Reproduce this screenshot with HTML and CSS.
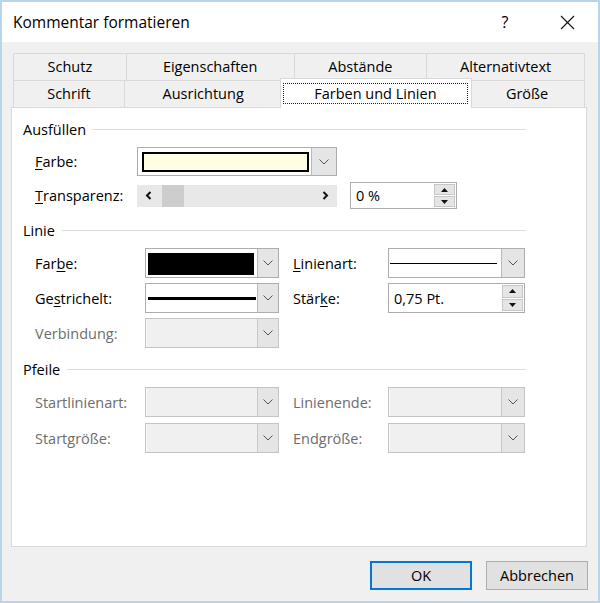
FILE: index.html
```html
<!DOCTYPE html>
<html lang="de">
<head>
<meta charset="utf-8">
<title>Kommentar formatieren</title>
<link rel="stylesheet" href="styles.css">
</head>
<body>
<div class="window">
  <div class="titlebar">
    <span class="title">Kommentar formatieren</span>
    <span class="help">?</span>
    <span class="close"><svg width="15" height="15" viewBox="0 0 15 15"><path d="M1 1L14 14M14 1L1 14" stroke="#111" stroke-width="1.1" fill="none"/></svg></span>
  </div>
  <div class="content">
    <div class="tabs">
      <div class="tabrow">
        <div class="tab t-schutz">Schutz</div>
        <div class="tab t-eigen">Eigenschaften</div>
        <div class="tab t-abst">Abstände</div>
        <div class="tab t-alt last">Alternativtext</div>
      </div>
      <div class="tabrow">
        <div class="tab t-schrift">Schrift</div>
        <div class="tab t-ausr">Ausrichtung</div>
        <div class="tab selected"><span class="focus">Farben und Linien</span></div>
        <div class="tab t-groesse last">Größe</div>
      </div>
    </div>

    <div class="panel">
      <div class="ghead"><span>Ausfüllen</span><i class="rule"></i></div>
      <div class="row fill r1">
        <span class="lbl"><u>F</u>arbe:</span>
        <div class="combo c-fill">
          <div class="field"><span class="swatch yellow"></span></div>
          <span class="drop wide"><svg width="10" height="6" viewBox="0 0 10 6"><path d="M0.5 0.5L5 5L9.5 0.5" stroke="#555" fill="none"/></svg></span>
        </div>
      </div>
      <div class="row fill r2">
        <span class="lbl"><u>T</u>ransparenz:</span>
        <div class="scroll">
          <span class="sarrow"><svg width="7" height="9" viewBox="0 0 7 9"><path d="M5.5 1L2 4.5L5.5 8" stroke="#111" stroke-width="2" fill="none"/></svg></span>
          <span class="thumb"></span>
          <span class="track"></span>
          <span class="sarrow"><svg width="7" height="9" viewBox="0 0 7 9"><path d="M1.5 1L5 4.5L1.5 8" stroke="#111" stroke-width="2" fill="none"/></svg></span>
        </div>
        <div class="spin s-fill">
          <span class="val">0 %</span>
          <span class="btns">
            <span><svg width="7" height="4" viewBox="0 0 7 4"><path d="M0 4L3.5 0L7 4Z" fill="#111"/></svg></span>
            <span><svg width="7" height="4" viewBox="0 0 7 4"><path d="M0 0L3.5 4L7 0Z" fill="#111"/></svg></span>
          </span>
        </div>
      </div>

      <div class="ghead sec"><span>Linie</span><i class="rule"></i></div>
      <div class="row line first">
        <span class="lbl">Far<u>b</u>e:</span>
        <div class="combo">
          <div class="field f-black"><span class="swatch black"></span></div>
          <span class="drop"><svg width="10" height="6" viewBox="0 0 10 6"><path d="M0.5 0.5L5 5L9.5 0.5" stroke="#555" fill="none"/></svg></span>
        </div>
        <span class="lbl lab2"><u>L</u>inienart:</span>
        <div class="combo">
          <div class="field f-thin"><span class="stroke thin"></span></div>
          <span class="drop wide"><svg width="10" height="6" viewBox="0 0 10 6"><path d="M0.5 0.5L5 5L9.5 0.5" stroke="#555" fill="none"/></svg></span>
        </div>
      </div>
      <div class="row line">
        <span class="lbl">Ge<u>s</u>trichelt:</span>
        <div class="combo">
          <div class="field f-thick"><span class="stroke thick"></span></div>
          <span class="drop"><svg width="10" height="6" viewBox="0 0 10 6"><path d="M0.5 0.5L5 5L9.5 0.5" stroke="#555" fill="none"/></svg></span>
        </div>
        <span class="lbl lab2">Stär<u>k</u>e:</span>
        <div class="spin">
          <span class="val">0,75 Pt.</span>
          <span class="btns">
            <span><svg width="7" height="4" viewBox="0 0 7 4"><path d="M0 4L3.5 0L7 4Z" fill="#111"/></svg></span>
            <span><svg width="7" height="4" viewBox="0 0 7 4"><path d="M0 0L3.5 4L7 0Z" fill="#111"/></svg></span>
          </span>
        </div>
      </div>
      <div class="row line">
        <span class="lbl off">Verbindung:</span>
        <div class="combo disabled">
          <div class="field"></div>
          <span class="drop"><svg width="10" height="6" viewBox="0 0 10 6"><path d="M0.5 0.5L5 5L9.5 0.5" stroke="#555" fill="none"/></svg></span>
        </div>
      </div>

      <div class="ghead sec"><span>Pfeile</span><i class="rule"></i></div>
      <div class="row line first">
        <span class="lbl off">Startlinienart:</span>
        <div class="combo disabled">
          <div class="field"></div>
          <span class="drop"><svg width="10" height="6" viewBox="0 0 10 6"><path d="M0.5 0.5L5 5L9.5 0.5" stroke="#555" fill="none"/></svg></span>
        </div>
        <span class="lbl lab2 off">Linienende:</span>
        <div class="combo disabled">
          <div class="field"></div>
          <span class="drop wide"><svg width="10" height="6" viewBox="0 0 10 6"><path d="M0.5 0.5L5 5L9.5 0.5" stroke="#555" fill="none"/></svg></span>
        </div>
      </div>
      <div class="row line r-gap6">
        <span class="lbl off">Startgröße:</span>
        <div class="combo disabled">
          <div class="field"></div>
          <span class="drop"><svg width="10" height="6" viewBox="0 0 10 6"><path d="M0.5 0.5L5 5L9.5 0.5" stroke="#555" fill="none"/></svg></span>
        </div>
        <span class="lbl lab2 off">Endgröße:</span>
        <div class="combo disabled">
          <div class="field"></div>
          <span class="drop wide"><svg width="10" height="6" viewBox="0 0 10 6"><path d="M0.5 0.5L5 5L9.5 0.5" stroke="#555" fill="none"/></svg></span>
        </div>
      </div>
    </div>

    <div class="buttons">
      <button class="btn default">OK</button>
      <button class="btn">Abbrechen</button>
    </div>
  </div>
</div>
</body>
</html>
```

FILE: styles.css
```css
* { box-sizing: border-box; }
html, body { margin: 0; padding: 0; }
body {
  background: #ffffff;
  font-family: "Open Sans", "Noto Sans", "Liberation Sans", sans-serif;
  font-size: 14.5px;
  color: #000;
}
.window {
  width: 600px;
  height: 603px;
  border: 2px solid #b9d5ea;
  background: #f0f0f0;
  display: flex;
  flex-direction: column;
}
.titlebar {
  flex: none;
  height: 40px;
  background: #ffffff;
  display: flex;
  align-items: center;
  padding: 0 8px 0 11px;
}
.title { flex: 1; font-size: 15.5px; }
.help { width: 30px; text-align: center; font-size: 16px; margin-right: 24px; }
.close { width: 46px; display: flex; align-items: center; justify-content: center; }

.content {
  flex: 1;
  display: flex;
  flex-direction: column;
  padding: 11px 11px 0 9px;
}

/* tabs */
.tabs { margin: 0 2px; }
.tabrow { display: flex; height: 27px; }
.tab {
  height: 27px;
  border: 1px solid #d9d9d9;
  border-bottom: none;
  margin-right: -1px;
  background: #f0f0f0;
  display: flex;
  align-items: center;
  justify-content: center;
  white-space: nowrap;
  padding-bottom: 1px;
}
.tab.last { margin-right: 0; }
.t-schutz { width: 114px; }
.t-eigen { width: 169px; }
.t-abst { width: 134px; }
.t-alt { width: 159px; }
.t-schrift { width: 112px; }
.t-ausr { width: 159px; }
.t-groesse { width: 116px; }
.tab.selected {
  position: relative;
  z-index: 2;
  width: 193px;
  height: 30px;
  margin: -2px -3px 0 -2px;
  background: #ffffff;
  padding: 4px 3px 4px 2px;
  align-items: stretch;
}
.focus {
  flex: 1;
  border: 1px dotted #222;
  display: flex;
  align-items: center;
  justify-content: center;
  padding-bottom: 1px;
}

/* panel */
.panel {
  flex: none;
  height: 440px;
  background: #ffffff;
  border: 1px solid #d9d9d9;
  padding: 12px 0 0 11px;
}
.ghead {
  width: 503px;
  height: 18px;
  display: flex;
  align-items: center;
}
.ghead.sec { margin-top: 12px; }
.rule { flex: 1; height: 1px; background: #dcdcdc; margin-left: 7px; margin-top: 1px; }

.row {
  display: grid;
  align-items: center;
  margin-left: 12px;
}
.lbl { white-space: nowrap; }
.lbl u { text-underline-offset: 2px; text-decoration-thickness: 1px; }
.lbl.off { color: #6d6d6d; }

.row.fill { grid-template-columns: 102px 200px 120px; }
.row.fill.r1 { height: 29px; margin-top: 9px; }
.row.fill.r2 { height: 27px; margin-top: 6px; }
.s-fill { margin-left: 13px; }

.row.line { grid-template-columns: 110px 134px 109px 137px; height: 30px; margin-top: 5px; }
.row.line.first { margin-top: 9px; }
.row.line.r-gap6 { margin-top: 6px; }
.lab2 { padding-left: 14px; }

/* combo boxes */
.combo {
  height: 100%;
  display: flex;
  border: 1px solid #adadad;
  background: #ffffff;
}
.combo .field { flex: 1; display: flex; align-items: center; }
.combo .drop {
  width: 21px;
  background: #e5e5e5;
  border-left: 1px solid #b9b9b9;
  display: flex;
  align-items: center;
  justify-content: center;
}
.combo .drop.wide { width: 23px; }
.combo.c-fill .drop { width: 25px; }
.combo.c-fill .field { padding: 4px 2px 3px 4px; align-items: stretch; }
.swatch { flex: 1; }
.swatch.yellow { background: #fffde2; border: 2px solid #000; }
.combo .f-black { padding: 4px 3px 2px 2px; align-items: stretch; }
.swatch.black { background: #000; }
.combo .f-thin { padding: 0 4px 0 1px; }
.combo .f-thick { padding: 0 1px 0 2px; }
.stroke { flex: 1; background: #000; }
.stroke.thin { height: 1px; }
.stroke.thick { height: 3px; }

.combo.disabled { background: #f0f0f0; border-color: #c4c4c4; }
.combo.disabled .field { border-left: 1px solid #fafafa; }
.combo.disabled .drop { background: #e5e5e5; border-left-color: #c8c8c8; }

/* scrollbar */
.scroll {
  height: 22px;
  display: flex;
  background: #e8e8e8;
}
.sarrow { width: 23px; display: flex; align-items: center; justify-content: center; }
.thumb { width: 22px; margin-left: 2px; background: #cdcdcd; }
.track { flex: 1; }

/* spin boxes */
.spin {
  height: 100%;
  display: flex;
  border: 1px solid #adadad;
  background: #ffffff;
}
.spin .val { flex: 1; display: flex; align-items: center; padding-left: 5px; }
.spin .btns {
  width: 23px;
  display: flex;
  flex-direction: column;
  gap: 1px;
  padding: 1px;
}
.spin .btns span {
  flex: 1;
  background: #e5e5e5;
  border: 1px solid #c6c6c6;
  display: flex;
  align-items: center;
  justify-content: center;
}

/* buttons */
.buttons {
  display: flex;
  justify-content: flex-end;
  gap: 14px;
  margin: 14px -1px 0 0;
}
.btn {
  width: 102px;
  height: 29px;
  background: #e1e1e1;
  border: 1px solid #adadad;
  font-family: inherit;
  font-size: 14.5px;
  color: #000;
  padding: 0 0 1px 0;
}
.btn.default { border: 2px solid #0078d7; }
```
